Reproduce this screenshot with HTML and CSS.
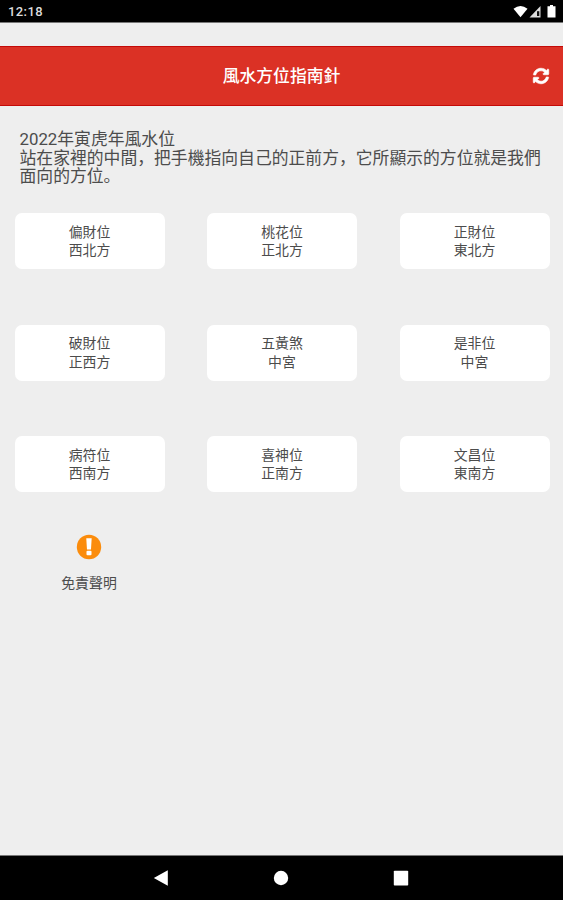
FILE: index.html
```html
<!DOCTYPE html>
<html lang="zh">
	<head>
		<meta charset="utf-8" />
		<meta name="viewport" content="width=device-width, initial-scale=1" />
		<title>風水方位指南針</title>
		<link rel="stylesheet" href="styles.css">
	</head>
	<body>
		<div class="statusbar">
			<span class="clock">12:18</span>
			<svg class="status-icons" width="44" height="16" viewBox="0 0 44 16">
				<path d="M0.500 4.700 Q7.500 -0.500 14.500 4.700 L7.500 13.200 Z" fill="#fff" />
				<path d="M27.500 2 V13.500 H16.500 Z" fill="#ddd" />
				<path d="M24 7.200 H26.300 V12 H24 Z" fill="#111" />
				<path d="M34.500 2.200 H37 V1 H40 V2.200 H42.500 V13.500 H34.500 Z" fill="#fff" />
			</svg>
		</div>

		<header class="titlebar">
			<h1>風水方位指南針</h1>
			<svg class="refresh" width="16" height="16" viewBox="0 0 512 512" fill="#fff" stroke="#fff" stroke-width="20">
				<path d="M370.700 133.300C339.500 104 298.900 88 255.800 88c-77.500.1-144.300 53.200-162.800 126.900-1.300 5.400-6.100 9.100-11.700 9.100H24.100c-7.500 0-13.200-6.800-11.800-14.200C33.900 94.900 134.800 8 256 8c66.400 0 126.800 26.100 171.300 68.700L463 41C478.100 25.900 504 36.600 504 57.900V192c0 13.300-10.700 24-24 24H345.900c-21.400 0-32.100-25.900-17-41zM32 296h134.100c21.400 0 32.100 25.900 17 41l-41.800 41.800c31.300 29.300 71.800 45.300 114.900 45.300 77.400-.1 144.300-53.100 162.800-126.800 1.300-5.400 6.100-9.100 11.700-9.100h57.300c7.500 0 13.200 6.800 11.800 14.200C478.100 417.100 377.200 504 256 504c-66.400 0-126.800-26.100-171.300-68.700L49 471C33.900 486.100 8 475.400 8 454.100V320c0-13.300 10.700-24 24-24z" />
			</svg>
		</header>

		<main>
			<p class="intro">2022年寅虎年風水位<br />站在家裡的中間，把手機指向自己的正前方，它所顯示的方位就是我們面向的方位。</p>

			<div class="grid">
				<div class="card">偏財位<br />西北方</div>
				<div class="card">桃花位<br />正北方</div>
				<div class="card">正財位<br />東北方</div>
				<div class="card">破財位<br />正西方</div>
				<div class="card">五黃煞<br />中宮</div>
				<div class="card">是非位<br />中宮</div>
				<div class="card">病符位<br />西南方</div>
				<div class="card">喜神位<br />正南方</div>
				<div class="card">文昌位<br />東南方</div>
			</div>

			<div class="disclaimer">
				<svg width="26" height="26" viewBox="0 0 26 26">
					<circle cx="13" cy="13" r="12.200" fill="#fb8c0c" />
					<path d="M10.300 4.300 H15.700 L15 15.400 H11 Z" fill="#fff" />
					<rect x="10.500" y="16.800" width="5" height="4.400" rx="1" fill="#fff" />
				</svg>
				<span>免責聲明</span>
			</div>
		</main>

		<nav class="navbar">
			<svg width="16" height="18" viewBox="0 0 16 18"><path d="M0.800 9 L14.800 1.300 V16.700 Z" fill="#fff" /></svg>
			<svg width="16" height="16" viewBox="0 0 16 16"><circle cx="8" cy="8" r="7.200" fill="#fff" /></svg>
			<svg width="16" height="16" viewBox="0 0 16 16"><rect x="0.800" y="0.800" width="14.400" height="14.800" rx="0.800" fill="#fff" /></svg>
		</nav>
	</body>
</html>
```

FILE: styles.css
```css
* {
	box-sizing: border-box;
}
body {
	display: flex;
	flex-direction: column;
	height: 900px;
	margin: 0;
	background-color: #eee;
	color: #4c4c4c;
	font-family: Roboto, "Noto Sans CJK SC", sans-serif;
}
.statusbar {
	display: flex;
	justify-content: space-between;
	align-items: center;
	height: 23px;
	padding: 1px 6px 0 8px;
	background-color: #000;
	border-bottom: 1px solid #777;
	color: #ddd;
}
.clock {
	font-size: 13px;
	font-weight: 500;
	letter-spacing: 0.4px;
}
.titlebar {
	display: grid;
	grid-template-columns: 1fr auto 1fr;
	align-items: center;
	height: 60px;
	margin-top: 23px;
	padding: 0 14px;
	background-color: #db3125;
	border-top: 1px solid #c40a08;
	border-bottom: 1px solid #c40a08;
	color: #fff;
}
.titlebar h1 {
	grid-column: 2;
	margin: 0;
	font-size: 16.8px;
	font-weight: 500;
	line-height: 20px;
}
.refresh {
	justify-self: end;
	overflow: visible;
}
main {
	flex: 1;
}
.intro {
	margin: 24px 15px 0 19.5px;
	font-size: 16.82px;
	line-height: 18.5px;
}
.grid {
	display: grid;
	grid-template-columns: repeat(3, 150px);
	grid-auto-rows: 56px;
	gap: 55.5px 42.5px;
	margin: 27.5px 0 0 14.5px;
}
.card {
	padding-top: 9.5px;
	background-color: #fff;
	border-radius: 7px;
	font-size: 13.9px;
	line-height: 18.5px;
	text-align: center;
}
.disclaimer {
	display: flex;
	flex-direction: column;
	align-items: center;
	gap: 13px;
	width: 150px;
	margin: 42px 0 0 14px;
	font-size: 13.9px;
	line-height: 20px;
}
.navbar {
	display: flex;
	justify-content: center;
	align-items: center;
	gap: 104px;
	height: 45px;
	padding-right: 1px;
	background-color: #000;
	border-top: 1px solid #777;
}
```
